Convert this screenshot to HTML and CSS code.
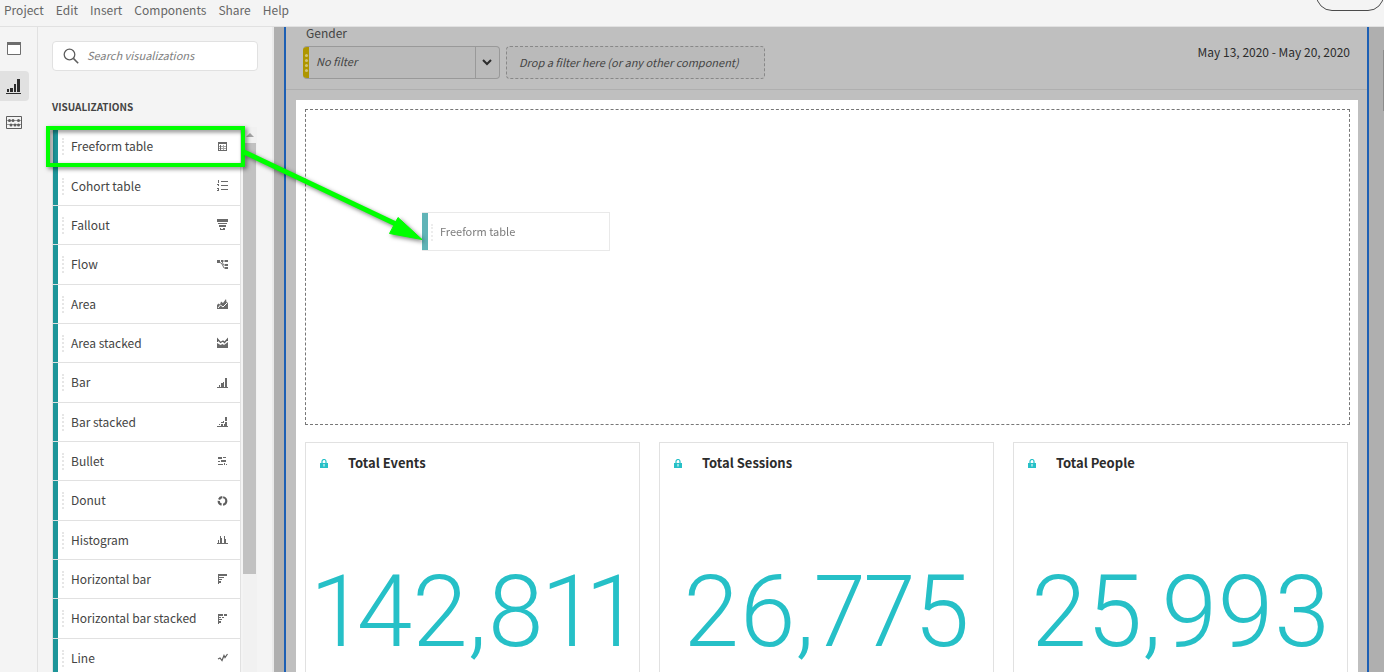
FILE: index.html
```html
<!DOCTYPE html>
<html lang="en">
<head>
<meta charset="utf-8">
<title>Analysis Workspace</title>
<link rel="stylesheet" href="styles.css">
</head>
<body>
<div class="app">
  <header class="menubar">
    <nav class="menus">
      <button class="menu">Project</button>
      <button class="menu">Edit</button>
      <button class="menu">Insert</button>
      <button class="menu">Components</button>
      <button class="menu">Share</button>
      <button class="menu">Help</button>
    </nav>
    <button class="pill" aria-label="Share project"></button>
  </header>

  <div class="body">
    <div class="rail">
      <button class="rail-item" aria-label="Panels">
        <svg width="14" height="14" viewBox="0 0 14 14"><path d="M.5.5h13v12H.5z" fill="#fff" stroke="#6e6e6e"/><path d="M0 0h14v3H0z" fill="#6e6e6e"/></svg>
      </button>
      <button class="rail-item rail-item-on" aria-label="Visualizations">
        <svg width="16" height="16" viewBox="0 0 16 16" fill="#2c2c2c"><path d="M0 15h15v1H0zM1 11h2v3H1zM4 10h3v4H4zM8 6h2v8H8zM11 1h3v13h-3z"/></svg>
      </button>
      <button class="rail-item" aria-label="Components">
        <svg width="16" height="14" viewBox="0 0 16 14" fill="#5e5e5e"><path d="M.5.5h15v12H.5z" fill="none" stroke="#5e5e5e"/><path d="M0 4h16v1H0zM0 8h16v1H0z" opacity=".6"/><circle cx="3.500" cy="4.500" r="1.500"/><circle cx="7" cy="4.500" r="1.500"/><circle cx="12.500" cy="4.500" r="1.500"/><circle cx="5" cy="9" r="1.500"/><circle cx="9" cy="9" r="1.500"/><circle cx="12.500" cy="9" r="1.500"/></svg>
      </button>
    </div>

    <aside class="sidebar">
      <label class="search">
        <svg width="16" height="16" viewBox="0 0 16 16" fill="none" stroke="#5e5e5e" stroke-width="1.300"><circle cx="6.500" cy="6.500" r="5.300"/><path d="M10.400 10.400l4.800 4.800" stroke-width="1.500"/></svg>
        <input type="search" placeholder="Search visualizations" aria-label="Search visualizations">
      </label>
      <h2 class="section-title">VISUALIZATIONS</h2>
      <div class="list-wrap">
        <ul class="list">
          <li class="row"><span class="row-name">Freeform table</span><svg class="ico" viewBox="0 0 11 12"><path d="M1 1h9v2H1zM1 3h1v6H1zM9 3h1v6H9zM1 9h9v1H1zM3 4h1v5H3z"/><path d="M2 5h7v1H2zM2 7h7v1H2zM6 4h1v5H6z" opacity=".6"/></svg></li>
          <li class="row"><span class="row-name">Cohort table</span><svg class="ico" viewBox="0 0 11 12"><path d="M4 1h7v1H4zM4 5h7v1H4zM4 9h7v1H4zM1 0h1v3H1zM0 4h2v1H0zM1 5h1v1H1zM0 8h2v1H0zM1 9h1v1H1zM0 10h2v1H0z"/></svg></li>
          <li class="row"><span class="row-name">Fallout</span><svg class="ico" viewBox="0 0 11 12"><path d="M0 0h11v3H0zM1 4h9v1H1zM2 6h7v2H2zM3 9h5v2H3z"/><path d="M4 9h2v1H4z" fill="#fff"/></svg></li>
          <li class="row"><span class="row-name">Flow</span><svg class="ico smooth" viewBox="0 0 11 12"><path d="M0 1h3v3H0zM4 1h2v2H4zM8 1h3v2H8zM8 5h3v2H8zM8 8h3v2H8z"/><path d="M2.500 3L5 5l2 4h1.500M5 2.500L6.500 6H8M6 2h2" fill="none" stroke="#777"/></svg></li>
          <li class="row"><span class="row-name">Area</span><svg class="ico smooth" viewBox="0 0 11 12"><path d="M0 7l1.500-1.500L3 6.500l1-3 2 1.500 3-4 .500 3L11 5v6H0z"/><path d="M1 10l2.500-3L6 9l4-4" fill="none" stroke="#fff"/></svg></li>
          <li class="row"><span class="row-name">Area stacked</span><svg class="ico smooth" viewBox="0 0 11 12"><path d="M0 6l3.500 2 2-1 1.500 1 4-3v6H0z"/><path d="M.5 5V2l3 3.500 2.500-1.500 1.500 1.500L10.500 2v2" fill="none" stroke="#5e5e5e" stroke-width="1.300"/></svg></li>
          <li class="row"><span class="row-name">Bar</span><svg class="ico" viewBox="0 0 11 12"><path d="M0 10h11v1H0zM2 8h1v2H2zM4 6h2v4H4zM6 5h1v5H6zM8 1h2v9H8z"/></svg></li>
          <li class="row"><span class="row-name">Bar stacked</span><svg class="ico" viewBox="0 0 11 12"><path d="M0 10h11v1H0zM2 8h1v1H2zM4 6h2v1H4zM4 8h2v2H4zM6 5h1v2H6zM7 8h1v2H7zM8 1h2v4H8zM8 6h2v4H8z"/></svg></li>
          <li class="row"><span class="row-name">Bullet</span><svg class="ico" viewBox="0 0 11 12"><path d="M1 2h4v2H1zM6 2h3v1H6zM1 6h2v1H1zM4 5h5v2H4zM1 9h5v1H1zM7 8h1v2H7zM9 9h1v1H9z"/></svg></li>
          <li class="row"><span class="row-name">Donut</span><svg class="ico smooth" viewBox="0 0 11 12"><circle cx="5.500" cy="6" r="3.800" fill="none" stroke="#5e5e5e" stroke-width="2.200" stroke-dasharray="10.400 1.500 5 1.500 4 1.480" transform="rotate(-80 5.500 6)"/></svg></li>
          <li class="row"><span class="row-name">Histogram</span><svg class="ico" viewBox="0 0 11 12"><path d="M0 9h11v1H0zM1 6h1v3H1zM3 2h1v7H3zM4 4h1v5H4zM7 2h1v7H7zM8 5h1v4H8z"/></svg></li>
          <li class="row"><span class="row-name">Horizontal bar</span><svg class="ico" viewBox="0 0 11 12"><path d="M1 1h1v10H1zM2 1h8v2H2zM2 4h5v1H2zM2 6h3v1H2zM2 8h2v2H2z"/></svg></li>
          <li class="row"><span class="row-name">Horizontal bar stacked</span><svg class="ico" viewBox="0 0 11 12"><path d="M1 1h1v10H1zM2 1h4v2H2zM7 1h3v2H7zM2 4h2v1H2zM5 4h2v1H5zM2 6h3v1H2zM2 8h2v2H2z"/></svg></li>
          <li class="row"><span class="row-name">Line</span><svg class="ico smooth" viewBox="0 0 11 12"><path d="M1 7l2-1 2 2.500 2-5 1 2L10.500 2" fill="none" stroke="#5e5e5e" stroke-width="1.200"/></svg></li>
        </ul>
        <div class="track"><span class="track-up"></span><span class="thumb"></span></div>
      </div>
    </aside>

    <main class="workspace">
      <section class="panel">
        <div class="panel-head">
          <div class="filters">
            <label class="filter-label" for="gender">Gender</label>
            <div class="filter-row">
              <div class="picker">
                <span class="grip"><i></i><i></i><i></i><i></i></span>
                <select class="picker-select" id="gender"><option>No filter</option></select>
                <svg class="chevron" width="10" height="7" viewBox="0 0 10 7"><path d="M1 1l4 4 4-4" fill="none" stroke="#2c2c2c" stroke-width="2"/></svg>
              </div>
              <div class="dropzone">Drop a filter here (or any other component)</div>
            </div>
          </div>
          <button class="date">May 13, 2020 - May 20, 2020</button>
        </div>
        <div class="canvas">
          <div class="target"></div>
          <div class="cards">
            <article class="card">
              <h3 class="card-title"><svg class="lock" viewBox="0 0 8 9"><path d="M2 4V2.500a2 2 0 014 0V4" fill="none" stroke="#26c0c7" stroke-width="1.200"/><path d="M0 4h8v5H0z" fill="#26c0c7"/><path d="M3.500 5h1v2.500h-1z" fill="#fff"/></svg>Total Events</h3>
              <p class="figure">142,811</p>
            </article>
            <article class="card">
              <h3 class="card-title"><svg class="lock" viewBox="0 0 8 9"><path d="M2 4V2.500a2 2 0 014 0V4" fill="none" stroke="#26c0c7" stroke-width="1.200"/><path d="M0 4h8v5H0z" fill="#26c0c7"/><path d="M3.500 5h1v2.500h-1z" fill="#fff"/></svg>Total Sessions</h3>
              <p class="figure">26,775</p>
            </article>
            <article class="card">
              <h3 class="card-title"><svg class="lock" viewBox="0 0 8 9"><path d="M2 4V2.500a2 2 0 014 0V4" fill="none" stroke="#26c0c7" stroke-width="1.200"/><path d="M0 4h8v5H0z" fill="#26c0c7"/><path d="M3.500 5h1v2.500h-1z" fill="#fff"/></svg>Total People</h3>
              <p class="figure">25,993</p>
            </article>
          </div>
        </div>
      </section>
      <div class="page-track"><span class="page-thumb"></span></div>
    </main>
  </div>

  <div class="ghost">Freeform table</div>
  <div class="highlight"></div>
  <svg class="arrow" width="200" height="110" viewBox="0 0 200 110"><path d="M4 11L160 85" stroke="#0f0" stroke-width="5"/><path d="M158 76.500L182 98.500 149.500 92.500z" fill="#0f0" stroke="#0f0"/></svg>
</div>
</body>
</html>
```
FILE: styles.css
```css
* {
  box-sizing: border-box;
}

body {
  margin: 0;
  background: #f4f4f4;
  color: #444;
  font-family: "Noto Sans CJK SC", "Open Sans", sans-serif;
  font-size: 12px;
  line-height: 20px;
}

button,
input,
select {
  margin: 0;
  padding: 0;
  border: 0;
  background: none;
  color: inherit;
  font: inherit;
}

.app {
  position: relative;
  display: flex;
  flex-direction: column;
  height: 100vh;
  overflow: hidden;
}

/* Menu bar */
.menubar {
  display: flex;
  flex: none;
  justify-content: space-between;
  height: 27px;
  padding-left: 4px;
  border-bottom: 1px solid #e1e1e1;
  overflow: hidden;
}

.menus {
  display: flex;
  gap: 12px;
  height: 20px;
  color: #666;
}

.pill {
  width: 68px;
  height: 32px;
  margin-top: -21px;
  border: 1px solid #4b4b4b;
  border-radius: 16px;
}

.body {
  display: flex;
  flex: 1;
  min-height: 0;
}

/* Left rail */
.rail {
  display: flex;
  flex: none;
  flex-direction: column;
  gap: 7px;
  width: 38px;
  padding-top: 7px;
  border-right: 1px solid #e1e1e1;
}

.rail-item {
  display: flex;
  align-items: center;
  justify-content: center;
  width: 29px;
  height: 30px;
  padding-right: 1px;
  border-radius: 0 4px 4px 0;
}

.rail-item-on {
  background: #e1e1e1;
}

/* Visualization list */
.sidebar {
  display: flex;
  flex: none;
  flex-direction: column;
  width: 236px;
  padding: 14px 14px 0;
  border-right: 2px solid #eaeaea;
}

.search {
  display: flex;
  flex: none;
  align-items: center;
  gap: 8px;
  width: 206px;
  height: 30px;
  padding: 0 10px;
  border: 1px solid #e1e1e1;
  border-radius: 4px;
  background: #fff;
}

.search input {
  flex: 1;
  min-width: 0;
  padding-bottom: 2px;
  font-size: 11px;
  font-style: italic;
  outline: 0;
}

.search input::placeholder {
  color: #7e7e7e;
}

.section-title {
  margin: 26px 0 10px;
  font-size: 10px;
  font-weight: 700;
  line-height: 20px;
}

.list-wrap {
  display: flex;
  flex: 1;
  gap: 2px;
  min-height: 0;
  overflow: hidden;
}

.list {
  flex: none;
  width: 189px;
  margin: 0;
  padding: 0;
  list-style: none;
}

.row {
  position: relative;
  display: flex;
  align-items: center;
  justify-content: space-between;
  height: 39px;
  padding: 0 12px;
  border: solid #e1e1e1;
  border-width: 0 1px 1px;
  background: linear-gradient(#1d9599, #1d9599) 0 0 / 5px 100% no-repeat #fff;
}

.row:nth-child(3n + 1) {
  height: 40px;
}

.row-name {
  padding: 0 0 1px 6px;
}

.row::before,
.ghost::before {
  content: "";
  position: absolute;
  left: 9px;
  top: 11px;
  height: 17px;
  border-left: 2px dotted #e6e6e6;
}

.ico {
  width: 11px;
  height: 12px;
  fill: #6a6a6a;
  shape-rendering: crispEdges;
}

.smooth {
  shape-rendering: auto;
}

.track {
  display: flex;
  flex-direction: column;
  align-items: center;
  width: 14px;
  padding: 6px 1px 0 0;
  background: #f1f1f1;
}

.track-up {
  flex: none;
  border: solid transparent;
  border-width: 0 4px 4px;
  border-bottom-color: #a3a3a3;
}

.thumb {
  width: 100%;
  height: 431px;
  margin-top: 6px;
  flex: none;
  background: #c1c1c1;
}

/* Workspace */
.workspace {
  display: flex;
  flex: 1;
  min-width: 0;
  padding-left: 10px;
  background: #afafaf;
}

.panel {
  display: flex;
  flex: 1;
  flex-direction: column;
  min-width: 0;
  border: solid #1c5fb4;
  border-width: 0 2px;
  background: #bfbfbf;
}

.page-track {
  width: 15px;
  padding: 23px 0 0 14px;
}

.page-thumb {
  display: block;
  height: 61px;
  background: #8c8c8c;
}

.panel-head {
  display: flex;
  flex: none;
  justify-content: space-between;
  height: 63px;
  padding: 0 17px;
  border-bottom: 1px solid #afafaf;
}

.filter-label {
  display: block;
  height: 19px;
  padding: 0 3px;
  line-height: 12px;
}

.filter-row {
  display: flex;
  gap: 6px;
}

.picker {
  position: relative;
  display: flex;
  width: 197px;
  height: 33px;
  border: 1px solid #999;
  border-left: 0;
  border-radius: 4px;
  background: #bababa;
  overflow: hidden;
}

.grip {
  display: flex;
  flex: none;
  flex-direction: column;
  align-items: center;
  justify-content: center;
  gap: 2px;
  width: 6px;
  background: #ae9600;
}

.grip i {
  width: 3px;
  height: 3px;
  border-radius: 50%;
  background: #d0c478;
}

.picker-select {
  flex: 1;
  padding: 0 0 3px 7px;
  appearance: none;
  background: linear-gradient(#999, #999) right 23px top 0 / 1px 100% no-repeat;
  font-size: 11px;
  font-style: italic;
}

.chevron {
  position: absolute;
  right: 7px;
  top: 12px;
  pointer-events: none;
}

.dropzone {
  width: 259px;
  height: 33px;
  padding: 0 12px;
  border: 1px dashed #888;
  border-radius: 4px;
  background: #bababa;
  font-size: 11px;
  font-style: italic;
  line-height: 30px;
  white-space: nowrap;
}

.date {
  height: 20px;
  margin-top: 15px;
  color: #2c2c2c;
}

.canvas {
  flex: 1;
  margin: 10px 9px 0 10px;
  padding: 9px 8px 0 9px;
  background: #fff;
}

.target {
  height: 316px;
  border: 1px dashed #777;
}

.cards {
  display: grid;
  grid-template-columns: repeat(3, minmax(0, 1fr));
  gap: 19px;
  margin: 17px 2px 0 0;
}

.card {
  height: 260px;
  border: 1px solid #e1e1e1;
}

.card-title {
  display: flex;
  align-items: center;
  gap: 20px;
  margin: 10px 0 0 14px;
  color: #2c2c2c;
  font-size: 13px;
  font-weight: 700;
  line-height: 20px;
}

.lock {
  width: 8px;
  height: 9px;
}

.figure {
  margin: 84px 0 0;
  color: #26c0c7;
  font-family: Roboto, sans-serif;
  font-size: 100px;
  font-weight: 300;
  font-variant-numeric: proportional-nums;
  line-height: 110px;
  text-align: center;
}

/* Dragged item and callout */
.ghost {
  position: absolute;
  left: 422px;
  top: 212px;
  width: 188px;
  height: 39px;
  padding-left: 18px;
  border: 1px solid #e1e1e1;
  border-left: 0;
  background: linear-gradient(#1d9599, #1d9599) 0 0 / 6px 100% no-repeat #fff;
  line-height: 37px;
  font-size: 11px;
  opacity: .7;
}

.highlight {
  position: absolute;
  left: 46px;
  top: 126px;
  width: 199px;
  height: 41px;
  border: 4px solid #0f0;
  filter: drop-shadow(2px 2px 2px rgba(0, 0, 0, .5));
}

.arrow {
  position: absolute;
  left: 240px;
  top: 141px;
  filter: drop-shadow(2px 2px 2px rgba(0, 0, 0, .5));
}
```
